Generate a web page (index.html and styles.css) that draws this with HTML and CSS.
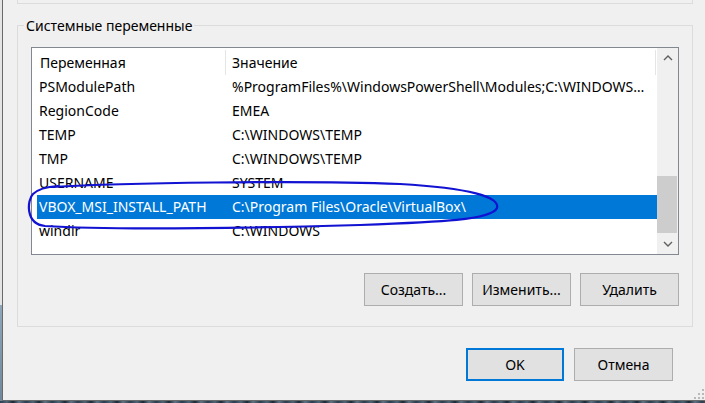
FILE: index.html
```html
<!DOCTYPE html>
<html lang="ru">
<head>
<meta charset="utf-8">
<title>Системные переменные</title>
<link rel="stylesheet" href="styles.css">
</head>
<body>
<div class="screen">
  <div class="top">
    <div class="side"></div>
    <div class="dialog">
      <div class="prev-group"></div>
      <div class="group">
        <div class="group-title">Системные переменные</div>
        <div class="list">
          <div class="list-body">
            <div class="header">
              <div class="hcell c1">Переменная</div>
              <div class="hcell c2">Значение</div>
            </div>
            <div class="row"><div class="cell c1">PSModulePath</div><div class="cell c2">%ProgramFiles%\WindowsPowerShell\Modules;C:\WINDOWS\system32\WindowsPowerShell\v1.0\Modules</div></div>
            <div class="row"><div class="cell c1">RegionCode</div><div class="cell c2">EMEA</div></div>
            <div class="row"><div class="cell c1">TEMP</div><div class="cell c2">C:\WINDOWS\TEMP</div></div>
            <div class="row"><div class="cell c1">TMP</div><div class="cell c2">C:\WINDOWS\TEMP</div></div>
            <div class="row"><div class="cell c1">USERNAME</div><div class="cell c2">SYSTEM</div></div>
            <div class="row selected"><div class="cell c1">VBOX_MSI_INSTALL_PATH</div><div class="cell c2">C:\Program Files\Oracle\VirtualBox\</div></div>
            <div class="row"><div class="cell c1">windir</div><div class="cell c2">C:\WINDOWS</div></div>
          </div>
          <div class="scrollbar">
            <div class="sb-btn up"><svg width="10" height="6" viewBox="0 0 10 6"><polyline points="1,5 5,1 9,5" fill="none" stroke="#606060" stroke-width="1.4"/></svg></div>
            <div class="sb-track"><div class="sb-thumb"></div></div>
            <div class="sb-btn down"><svg width="10" height="6" viewBox="0 0 10 6"><polyline points="1,1 5,5 9,1" fill="none" stroke="#606060" stroke-width="1.4"/></svg></div>
          </div>
        </div>
        <div class="actions">
          <button class="btn">Создать...</button>
          <button class="btn">Изменить...</button>
          <button class="btn">Удалить</button>
        </div>
      </div>
      <div class="footer">
        <button class="btn ok">OK</button>
        <button class="btn cancel">Отмена</button>
      </div>
      <svg class="grip" width="12" height="12" viewBox="0 0 12 12">
        <rect x="9" y="1" width="2" height="2" fill="#b9b9b9"/>
        <rect x="9" y="5" width="2" height="2" fill="#b9b9b9"/>
        <rect x="5" y="5" width="2" height="2" fill="#b9b9b9"/>
        <rect x="9" y="9" width="2" height="2" fill="#b9b9b9"/>
        <rect x="5" y="9" width="2" height="2" fill="#b9b9b9"/>
        <rect x="1" y="9" width="2" height="2" fill="#b9b9b9"/>
      </svg>
    </div>
  </div>
  <div class="desktop"></div>
  <svg class="annotation" width="705" height="403" viewBox="0 0 705 403">
    <path d="M 52 187 C 120 183, 300 180, 400 184 C 470 188, 500 197, 497 208 C 492 220, 440 222, 360 225 C 250 228, 120 231, 45 226 C 25 224, 27 200, 33 194 C 38 189, 45 187, 58 186" fill="none" stroke="#1212d2" stroke-width="2.2" stroke-linecap="round"/>
  </svg>
</div>
</body>
</html>
```
FILE: styles.css
```css
html, body {
  margin: 0;
  padding: 0;
}
body {
  font-family: "Noto Sans", "Open Sans", sans-serif;
  font-size: 14px;
  color: #000;
  background: #f0f0f0;
}
.screen {
  width: 705px;
  height: 403px;
  position: relative;
  overflow: hidden;
  display: flex;
  flex-direction: column;
}
.top {
  display: flex;
  height: 401px;
}
.side {
  width: 2px;
  background: linear-gradient(to bottom, #e4e4e4 0, #e4e4e4 305px, #8fa7b8 305px, #6f889b 100%);
}
.dialog {
  flex: 1;
  background: #f0f0f0;
  border-left: 1px solid #6a6a6a;
  border-bottom: 1px solid #6a6a6a;
  display: flex;
  flex-direction: column;
  position: relative;
}
.desktop {
  height: 2px;
  background: repeating-linear-gradient(90deg, #2b3d4e 0, #4c6679 7px, #1d2934 13px, #5d7487 19px, #2b3d4e 26px);
}
.prev-group {
  margin-left: 14px;
  width: 676px;
  height: 4px;
  box-sizing: border-box;
  border: 1px solid #dcdcdc;
  border-top: 0;
}
.group {
  margin: 21px 0 0 14px;
  width: 676px;
  box-sizing: border-box;
  border: 1px solid #dcdcdc;
  padding: 0 13px 20px;
  display: flex;
  flex-direction: column;
}
.group-title {
  align-self: flex-start;
  margin: -10px 0 0 -7px;
  padding: 0 2px;
  line-height: 19px;
  background: #f0f0f0;
}
.list {
  margin-top: 12px;
  height: 208px;
  box-sizing: border-box;
  border: 1px solid #828790;
  background: #fff;
  display: flex;
}
.list-body {
  flex: 1;
  min-width: 0;
  overflow: hidden;
}
.header {
  display: flex;
  margin-left: 5px;
  padding-top: 2px;
  height: 25px;
}
.hcell {
  box-sizing: border-box;
  line-height: 25px;
  border-right: 1px solid #e5e5e5;
  white-space: nowrap;
}
.hcell.c1 {
  width: 189px;
  padding-left: 3px;
}
.hcell.c2 {
  width: 430px;
  padding-left: 6px;
}
.row {
  display: flex;
  margin-left: 5px;
  height: 24px;
  line-height: 24px;
  white-space: nowrap;
}
.cell.c1 {
  width: 193px;
  box-sizing: border-box;
  padding-left: 2px;
  overflow: hidden;
}
.cell.c2 {
  flex: 1;
  min-width: 0;
  padding: 0 10px 0 2px;
  overflow: hidden;
  text-overflow: ellipsis;
}
.row.selected {
  background: #0078d7;
  color: #fff;
}
.scrollbar {
  width: 21px;
  background: #f0f0f0;
  display: flex;
  flex-direction: column;
}
.sb-btn {
  height: 21px;
  display: flex;
  align-items: center;
  justify-content: center;
}
.sb-btn.up {
  padding-bottom: 1px;
  box-sizing: border-box;
}
.sb-track {
  flex: 1;
  display: flex;
  flex-direction: column;
  justify-content: flex-end;
}
.sb-thumb {
  height: 57px;
  margin-right: 1px;
  background: #cdcdcd;
}
.actions {
  margin-top: 18px;
  display: flex;
  justify-content: flex-end;
  gap: 9px;
}
.btn {
  font: inherit;
  color: #000;
  width: 99px;
  height: 33px;
  padding: 0;
  margin: 0;
  background: #e1e1e1;
  border: 1px solid #adadad;
  box-sizing: border-box;
}
.footer {
  margin-top: 21px;
  padding-right: 32px;
  display: flex;
  justify-content: flex-end;
  gap: 10px;
}
.btn.ok {
  width: 98px;
  border: 2px solid #0078d7;
}
.grip {
  position: absolute;
  right: 0;
  bottom: 0;
}
.annotation {
  position: absolute;
  left: 0;
  top: 0;
  pointer-events: none;
}
```
